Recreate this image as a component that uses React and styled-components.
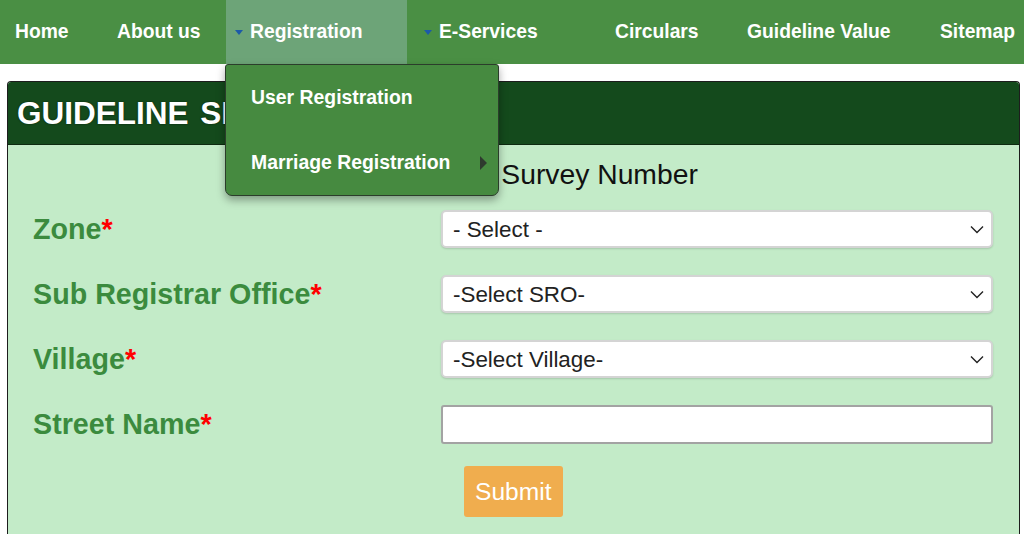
import React from 'react';
import styled, { createGlobalStyle } from 'styled-components';

const NAV_ITEMS = [
  { id: 1, label: 'Home', width: 102 },
  { id: 2, label: 'About us', width: 124 },
  { id: 3, label: 'Registration', width: 181, caret: true, active: true },
  { id: 4, label: 'E-Services', width: 185, caret: true, offset: 8 },
  { id: 5, label: 'Circulars', width: 132 },
  { id: 6, label: 'Guideline Value', width: 193 },
  { id: 7, label: 'Sitemap', width: 99 },
];

const SUB_MENU = [
  { id: 1, label: 'User Registration' },
  { id: 2, label: 'Marriage Registration', more: true },
];

const FIELDS = [
  { id: 1, label: 'Zone', placeholder: '- Select -' },
  { id: 2, label: 'Sub Registrar Office', placeholder: '-Select SRO-' },
  { id: 3, label: 'Village', placeholder: '-Select Village-' },
  { id: 4, label: 'Street Name', text: true },
];

const GlobalStyle = createGlobalStyle`
  body {
    margin: 0;
    background: #fff;
    font-family: "Liberation Sans", Arial, Helvetica, sans-serif;
  }
`;

const Chevron = () => (
  <svg width="14" height="9" viewBox="0 0 14 9" fill="none">
    <path d="M1 1.5L7 7.5L13 1.5" stroke="#222" strokeWidth="1.4" />
  </svg>
);

const App = () => {
  return (
    <>
      <GlobalStyle />
      <NavBar>
        {NAV_ITEMS.map(item => {
          const { id, label, width, caret, active, offset } = item;
          return (
            <NavItem key={id} width={width} active={active} caret={caret} offset={offset}>
              {caret && <Caret />}
              {label}
              {active && (
                <DropMenu>
                  {SUB_MENU.map(sub => (
                    <DropItem key={sub.id}>
                      {sub.label}
                      {sub.more && <MoreArrow />}
                    </DropItem>
                  ))}
                </DropMenu>
              )}
            </NavItem>
          );
        })}
      </NavBar>

      <Panel>
        <PanelHeader>GUIDELINE SEARCH</PanelHeader>
        <PanelBody>
          <FormTitle>Search by Survey Number</FormTitle>
          <FormGrid>
            {FIELDS.map(field => {
              const { id, label, placeholder, text } = field;
              return (
                <React.Fragment key={id}>
                  <FieldLabel>
                    {label}
                    <Required>*</Required>
                  </FieldLabel>
                  {text ? (
                    <TextInput type="text" />
                  ) : (
                    <SelectWrap>
                      <SelectBox defaultValue="">
                        <option value="">{placeholder}</option>
                      </SelectBox>
                      <ChevronSpot>
                        <Chevron />
                      </ChevronSpot>
                    </SelectWrap>
                  )}
                </React.Fragment>
              );
            })}
            <span />
            <SubmitButton type="button">Submit</SubmitButton>
          </FormGrid>
        </PanelBody>
      </Panel>
    </>
  );
};

const NavBar = styled.nav`
  display: flex;
  height: 64px;
  background-color: #4a8f44;
`;

const NavItem = styled.div`
  position: relative;
  flex-shrink: 0;
  display: flex;
  align-items: center;
  width: ${({ width }) => width}px;
  margin-left: ${({ offset }) => offset || 0}px;
  padding-left: ${({ caret }) => (caret ? 9 : 15)}px;
  box-sizing: border-box;
  background-color: ${({ active }) => (active ? '#6da478' : 'transparent')};
  color: #fff;
  font-size: 19.3px;
  font-weight: bold;
  white-space: nowrap;
`;

const Caret = styled.span`
  width: 0;
  height: 0;
  margin-right: 7px;
  border-left: 4px solid transparent;
  border-right: 4px solid transparent;
  border-top: 5px solid #1c5aa8;
`;

const DropMenu = styled.div`
  position: absolute;
  top: 64px;
  left: -1px;
  z-index: 5;
  width: 274px;
  box-sizing: border-box;
  background-color: #468a40;
  border: 1px solid #2b3d2b;
  border-radius: 3px 3px 7px 7px;
  box-shadow: 0 4px 9px rgba(0, 0, 0, 0.35);
`;

const DropItem = styled.div`
  position: relative;
  display: flex;
  align-items: center;
  height: 65px;
  padding-left: 25px;
  color: #fff;
  font-size: 19.4px;
  font-weight: bold;
`;

const MoreArrow = styled.span`
  position: absolute;
  right: 11px;
  top: 26px;
  width: 0;
  height: 0;
  border-top: 7px solid transparent;
  border-bottom: 7px solid transparent;
  border-left: 7px solid #2e3a2e;
`;

const Panel = styled.section`
  margin: 17px 4px 0 7px;
  border: 1px solid #1d1d1d;
  border-bottom: none;
  border-radius: 4px 4px 0 0;
  overflow: hidden;
`;

const PanelHeader = styled.div`
  display: flex;
  align-items: center;
  height: 62px;
  padding-left: 9px;
  background-color: #144a1c;
  border-bottom: 1px solid #0d2a10;
  color: #fff;
  font-size: 31.5px;
  font-weight: bold;
  word-spacing: 3px;
  text-shadow: 0 0 2px #0a200c;
  white-space: nowrap;
`;

const PanelBody = styled.div`
  padding: 13px 26px 40px 25px;
  background-color: #c3ebc8;
`;

const FormTitle = styled.div`
  padding-left: 333px;
  line-height: 32px;
  font-size: 28.3px;
  color: #111;
`;

const FormGrid = styled.div`
  display: grid;
  grid-template-columns: 408px 1fr;
  row-gap: 27px;
  align-items: center;
  margin-top: 20px;
`;

const FieldLabel = styled.div`
  color: #3b8b3e;
  font-size: 28.7px;
  font-weight: bold;
`;

const Required = styled.span`
  color: #f00;
`;

const SelectWrap = styled.div`
  position: relative;
  height: 38px;
`;

const SelectBox = styled.select`
  appearance: none;
  width: 100%;
  height: 38px;
  padding: 0 36px 0 10px;
  background-color: #fff;
  border: 2px solid #d4d4d4;
  border-radius: 5px;
  box-shadow: 0 1px 2px rgba(0, 0, 0, 0.15);
  color: #222;
  font-family: "Liberation Sans", Arial, sans-serif;
  font-size: 22.4px;
  outline: none;
`;

const ChevronSpot = styled.span`
  position: absolute;
  right: 9px;
  top: 15px;
  display: flex;
  pointer-events: none;
`;

const TextInput = styled.input`
  box-sizing: border-box;
  width: 100%;
  height: 39px;
  padding: 0 10px;
  background-color: #fff;
  border: 2px solid #a3a3a3;
  border-radius: 3px;
  font-family: "Liberation Sans", Arial, sans-serif;
  font-size: 22px;
  outline: none;
`;

const SubmitButton = styled.button`
  justify-self: start;
  margin: -5px 0 0 23px;
  height: 51px;
  padding: 0 11px;
  background-color: #f0ad4e;
  border: none;
  border-radius: 3px;
  color: #fff;
  font-family: "Liberation Sans", Arial, sans-serif;
  font-size: 24.6px;
`;

export default App;
